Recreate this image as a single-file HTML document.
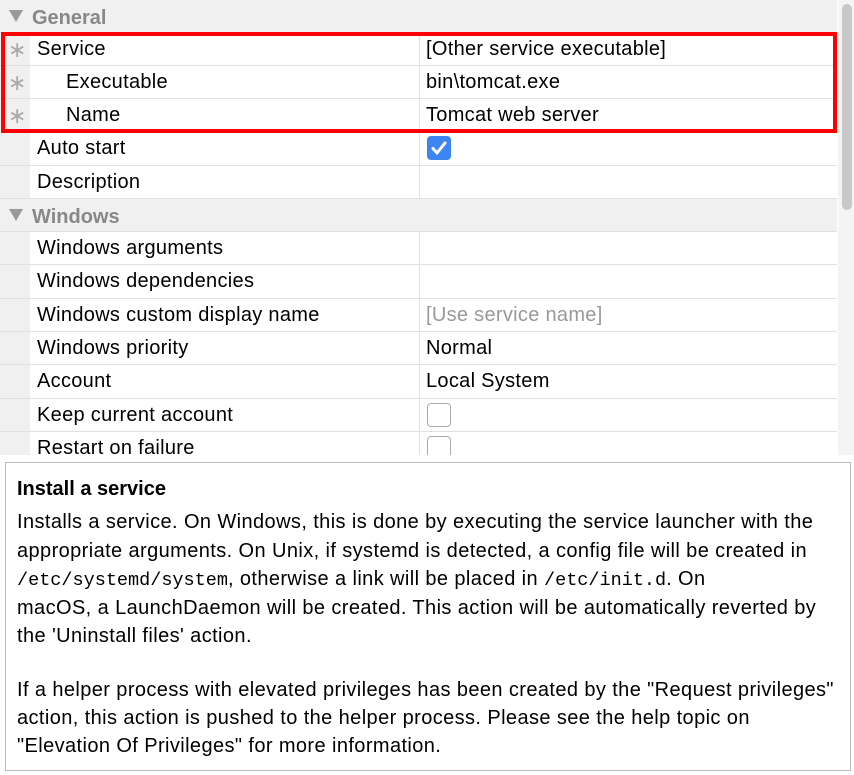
<!DOCTYPE html>
<html><head><meta charset="utf-8"><style>
*{margin:0;padding:0;box-sizing:border-box}
body{width:854px;height:775px;background:#fff;font-family:"Liberation Sans",sans-serif;position:relative;overflow:hidden;color:#000}
.row{position:absolute;left:0;width:837px;height:33px;border-bottom:1px solid #e0e0e0;background:#fff}
.g{position:absolute;left:0;top:0;width:30px;height:100%;background:#f0f0f0}
.l{position:absolute;left:37px;top:5px;font-size:20px;letter-spacing:0.3px;white-space:nowrap}
.v{position:absolute;left:419px;top:0;height:100%;border-left:1px solid #e0e0e0;padding-left:6px;padding-top:5px;font-size:20px;letter-spacing:0.3px;white-space:nowrap;width:418px}
.hdr{background:#f0f0f0}
.hdr .t{position:absolute;left:32px;top:7px;font-size:20px;font-weight:bold;color:#888}
.tri{position:absolute;left:9px;top:10px;width:0;height:0;border-left:7px solid transparent;border-right:7px solid transparent;border-top:12px solid #999}
.ast{position:absolute;left:8px;top:4px;font-size:22px;color:#aaa}
.cb{position:absolute;left:427px;top:4px;width:24px;height:24px;border:1.5px solid #aaa;border-radius:4px;background:#fff}
.cbk{background:#3d85f0;border-color:#3d85f0}
.p{position:absolute;left:17px;font-size:20px;letter-spacing:0.4px;white-space:nowrap}
.m{font-family:"Liberation Mono",monospace;font-size:18.5px;letter-spacing:0}
</style></head><body>
<div class="row hdr" style="top:0;height:33px"><div class="tri"></div><div class="t">General</div></div>
<div class="row" style="top:33px"><div class="g"></div><span class="ast">∗</span><div class="l">Service</div><div class="v">[Other service executable]</div></div>
<div class="row" style="top:66px"><div class="g"></div><span class="ast">∗</span><div class="l" style="left:66px">Executable</div><div class="v">bin\tomcat.exe</div></div>
<div class="row" style="top:99px"><div class="g"></div><span class="ast">∗</span><div class="l" style="left:66px">Name</div><div class="v">Tomcat web server</div></div>
<div class="row" style="top:132px;height:34px"><div class="g"></div><div class="l">Auto start</div><div class="v"></div><div class="cb cbk"><svg width="22" height="22" viewBox="0 0 22 22" style="position:absolute;left:0;top:0"><path d="M5 11.5l4 4.5 8-10" stroke="#fff" stroke-width="3" fill="none" stroke-linecap="round" stroke-linejoin="round"/></svg></div></div>
<div class="row" style="top:166px"><div class="g"></div><div class="l">Description</div><div class="v"></div></div>
<div class="row hdr" style="top:199px"><div class="tri"></div><div class="t">Windows</div></div>
<div class="row" style="top:232px"><div class="g"></div><div class="l">Windows arguments</div><div class="v"></div></div>
<div class="row" style="top:265px;height:34px"><div class="g"></div><div class="l">Windows dependencies</div><div class="v"></div></div>
<div class="row" style="top:299px"><div class="g"></div><div class="l">Windows custom display name</div><div class="v" style="color:#999">[Use service name]</div></div>
<div class="row" style="top:332px"><div class="g"></div><div class="l">Windows priority</div><div class="v">Normal</div></div>
<div class="row" style="top:365px;height:34px"><div class="g"></div><div class="l">Account</div><div class="v">Local System</div></div>
<div class="row" style="top:399px"><div class="g"></div><div class="l">Keep current account</div><div class="v"></div><div class="cb"></div></div>
<div class="row" style="top:432px;height:23px;overflow:hidden;border-bottom:none"><div class="g"></div><div class="l">Restart on failure</div><div class="v"></div><div class="cb"></div></div>
<div style="position:absolute;left:1px;top:32px;width:836px;height:101px;border:4px solid #f00"></div>
<div style="position:absolute;left:838px;top:0;width:16px;height:455px;background:#f4f4f4"></div>
<div style="position:absolute;left:842px;top:4px;width:10px;height:206px;background:#c8c8c8;border-radius:5px"></div>
<div style="position:absolute;left:5px;top:462px;width:846px;height:309px;border:1px solid #bbb;background:#fff"></div>
<div class="p" style="top:478px;font-weight:bold;letter-spacing:0">Install a service</div>
<div class="p" style="top:511px">Installs a service. On Windows, this is done by executing the service launcher with the</div>
<div class="p" style="top:540px">appropriate arguments. On Unix, if systemd is detected, a config file will be created in</div>
<div class="p" style="top:568px"><span class="m">/etc/systemd/system</span>, otherwise a link will be placed in <span class="m">/etc/init.d</span>. On</div>
<div class="p" style="top:597px">macOS, a LaunchDaemon will be created. This action will be automatically reverted by</div>
<div class="p" style="top:625px">the 'Uninstall files' action.</div>
<div class="p" style="top:679px">If a helper process with elevated privileges has been created by the "Request privileges"</div>
<div class="p" style="top:707px">action, this action is pushed to the helper process. Please see the help topic on</div>
<div class="p" style="top:735px">"Elevation Of Privileges" for more information.</div>
</body></html>
